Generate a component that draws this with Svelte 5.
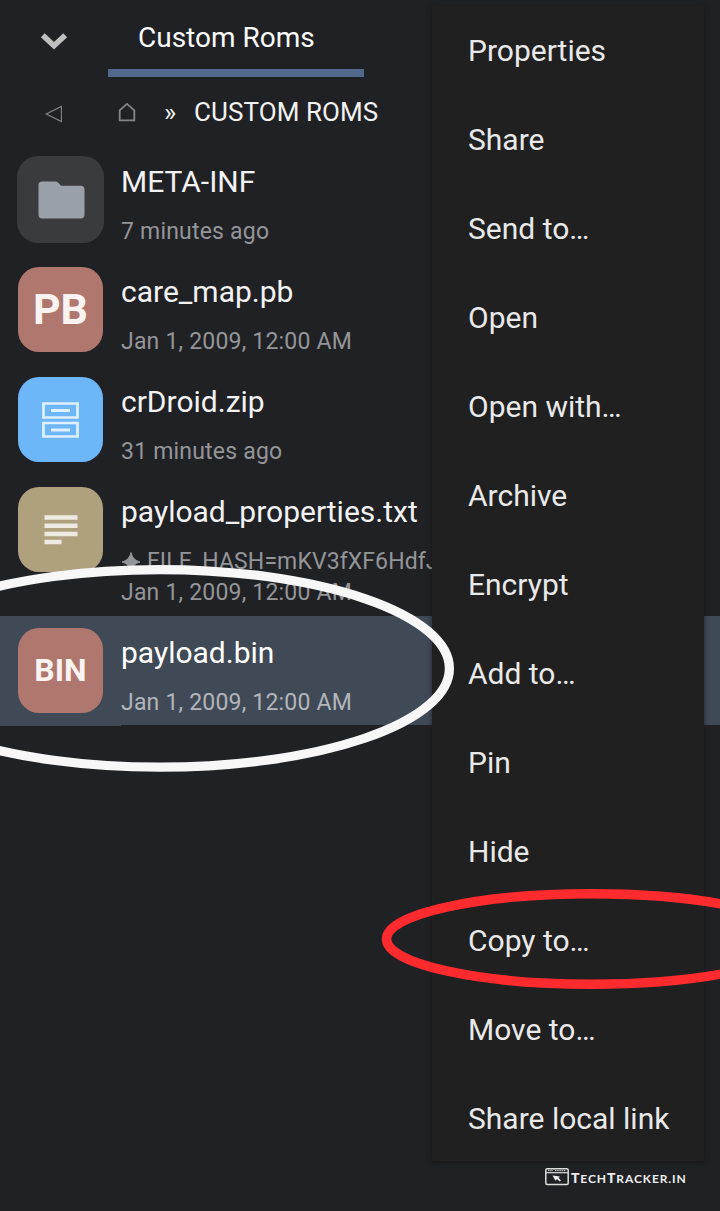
<script>
  const files = [
    { icon: 'folder', name: 'META-INF', date: '7 minutes ago' },
    { icon: 'pb', name: 'care_map.pb', date: 'Jan 1, 2009, 12:00 AM' },
    { icon: 'zip', name: 'crDroid.zip', date: '31 minutes ago' },
    { icon: 'txt', name: 'payload_properties.txt', note: 'FILE_HASH=mKV3fXF6HdfJ', date: 'Jan 1, 2009, 12:00 AM' },
    { icon: 'bin', name: 'payload.bin', date: 'Jan 1, 2009, 12:00 AM', selected: true }
  ];
  const actions = [
    'Properties', 'Share', 'Send to…', 'Open', 'Open with…', 'Archive', 'Encrypt',
    'Add to…', 'Pin', 'Hide', 'Copy to…', 'Move to…', 'Share local link'
  ];
</script>

<div class="screen">
  <header class="tabs">
    <svg class="chevron" width="28" height="18" viewBox="0 0 28 18"><path d="M2.800 3.200 14 13.700 25.200 3.200" fill="none" stroke="#bfbfbf" stroke-width="5.6" /></svg>
    <div class="tab">Custom Roms</div>
  </header>

  <nav class="crumbs">
    <svg class="back" width="18" height="18" viewBox="0 0 18 18"><path d="M1.2 9 16.4 1.5V16.5Z" fill="none" stroke="#85868a" stroke-width="1.1" /></svg>
    <svg class="home" width="18" height="20" viewBox="0 0 18 20"><path d="M1.7 18.400V8.400L9 1.900l7.300 6.500v10Z" fill="none" stroke="#85868a" stroke-width="1.800" /></svg>
    <span class="sep">»</span>
    <span class="path">CUSTOM ROMS</span>
  </nav>

  <main>
    {#each files as f}
      <div class="row" class:selected={f.selected}>
        <div class="tile {f.icon}">
          {#if f.icon === 'folder'}
            <svg width="47" height="38" viewBox="0 0 47 38"><path d="M4 .5H17.500Q19 .5 20 1.500L23 4.800H42.500Q46.500 4.800 46.500 8.800V33.500Q46.500 37.500 42.500 37.500H4Q.5 37.500 .5 33.500V4Q.5 .5 4 .5Z" fill="#9aa0a8" /></svg>
          {:else if f.icon === 'zip'}
            <svg width="37" height="36" viewBox="0 0 37 36"><g fill="none" stroke="#e0f0fe"><path d="M1.500 1.500H35.500V15.500H1.500ZM1.500 21H35.500V34.500H1.500Z" stroke-width="2.700" /><path d="M9 8.500H28M9 28H28" stroke-width="3" /></g></svg>
          {:else if f.icon === 'txt'}
            <svg width="34" height="30" viewBox="0 0 34 30"><path d="M.5 2.500H33.500M.5 10.700H33.500M.5 19H33.500M.5 27H17.500" stroke="#eeeae1" stroke-width="4.400" /></svg>
          {:else}
            <span>{f.icon.toUpperCase()}</span>
          {/if}
        </div>
        <div class="info">
          <div class="line"><span class="name">{f.name}</span></div>
          {#if f.note}
            <div class="sub note">
              <svg width="20" height="20" viewBox="0 0 20 20"><path d="M10 .5Q11.500 8 19 10Q11.500 12 10 19.500Q8.500 12 1 10Q8.500 8 10 .5Z" fill="#949598" stroke="#949598" /></svg>
              <span>{f.note}</span>
            </div>
          {/if}
          <div class="sub">{f.date}</div>
        </div>
      </div>
    {/each}
  </main>

  <div class="menu">
    {#each actions as a}
      <div class="action">{a}</div>
    {/each}
  </div>

  <svg class="marks" width="720" height="1211" viewBox="0 0 720 1211" fill="none">
    <ellipse cx="160" cy="668.4" rx="289.400" ry="98.800" stroke="#f7f7f7" stroke-width="9.200" />
    <ellipse cx="591.500" cy="939" rx="205" ry="45.200" stroke="#fd2a2e" stroke-width="9.500" />
  </svg>

  <div class="brand">
    <svg width="24" height="18" viewBox="0 0 24 18"><rect x=".8" y=".8" width="22.400" height="15.700" rx="1.500" fill="none" stroke="#dedede" stroke-width="1.500" /><path d="M1 4.700H23" stroke="#dedede" stroke-width="1.200" /><path d="M3 2.700H8M10 2.700H21" stroke="#dedede" stroke-width="1" stroke-dasharray="1.500 .7" /><path d="M7.500 7.500 15 8.600 13.500 9.700 16 12.400 14.600 13.400 12 11 10.500 12.800Z" fill="#ececec" /></svg>
    <span class="word"><b>T</b>ECH<b>T</b>RACKER.IN</span>
  </div>
</div>

<style>
  :global(body) { background: #202125; }
  .screen {
    position: relative;
    width: 720px;
    height: 1211px;
    overflow: hidden;
    background: #202125;
    color: #f2f2f2;
    font-family: Roboto, sans-serif;
    white-space: nowrap;
  }
  .tabs { display: flex; height: 77px; }
  .chevron { margin: 32px 40px 0 40px; flex: none; }
  .tab {
    box-sizing: border-box;
    width: 256px;
    height: 77px;
    border-bottom: 8px solid #50698d;
    padding-left: 30px;
    font-size: 28px;
    line-height: 76px;
    color: #fafafa;
  }
  .crumbs { display: flex; height: 68px; align-items: center; font-size: 26px; }
  .crumbs span { line-height: 30px; padding-top: 1px; }
  .back { margin: 5px 0 0 45px; }
  .home { margin: 2px 0 0 55px; }
  .sep { margin-left: 28px; width: 30px; }
  .crumbs .path { letter-spacing: .08px; }
  .row { display: flex; }
  .tile {
    flex: none;
    box-sizing: border-box;
    width: 85px;
    height: 85px;
    margin: 12px 18px 0 18px;
    border-radius: 21px;
    display: flex;
    align-items: center;
    justify-content: center;
    font-weight: 700;
    color: #faf3f1;
  }
  .tile span { padding-bottom: 1px; }
  .folder { width: 87px; height: 87px; margin: 11px 17px 0; background: #3a3b3e; padding-left: 1px; }
  .pb { background: #af776d; font-size: 43px; }
  .bin { background: #af776d; font-size: 32px; }
  .zip { background: #6db6f8; }
  .txt { background: #afa07e; }
  .info { padding: 18px 0 8px; }
  .line { height: 37px; margin-bottom: 16px; line-height: 37px; font-size: 30px; }
  .sub { height: 31px; line-height: 31px; font-size: 23px; letter-spacing: .2px; color: #949598; }
  .note { display: flex; align-items: center; gap: 6px; letter-spacing: .1px; }
  .selected { background: linear-gradient(#404956, #404956) 0 0 / 121px 110px no-repeat, linear-gradient(#404956, #404956) 0 0 / 720px 109px no-repeat; }
  .selected .sub { color: #b2b5bb; }
  .selected .name { color: #fff; }
  .menu {
    position: absolute;
    left: 432px;
    top: 6px;
    width: 272px;
    height: 1155px;
    background: #202020;
    box-shadow: 0 1px 5px rgba(20, 20, 22, .65);
  }
  .action { height: 89px; line-height: 89px; padding-left: 36px; font-size: 30px; color: #e9e9e9; }
  .marks { position: absolute; left: 0; top: 0; }
  .brand { position: absolute; left: 545px; top: 1168px; display: flex; gap: 2px; color: #ececec; }
  .word { font: 700 12px/20px Lato, sans-serif; letter-spacing: .900px; }
  .word b { font-size: 14px; }
</style>
